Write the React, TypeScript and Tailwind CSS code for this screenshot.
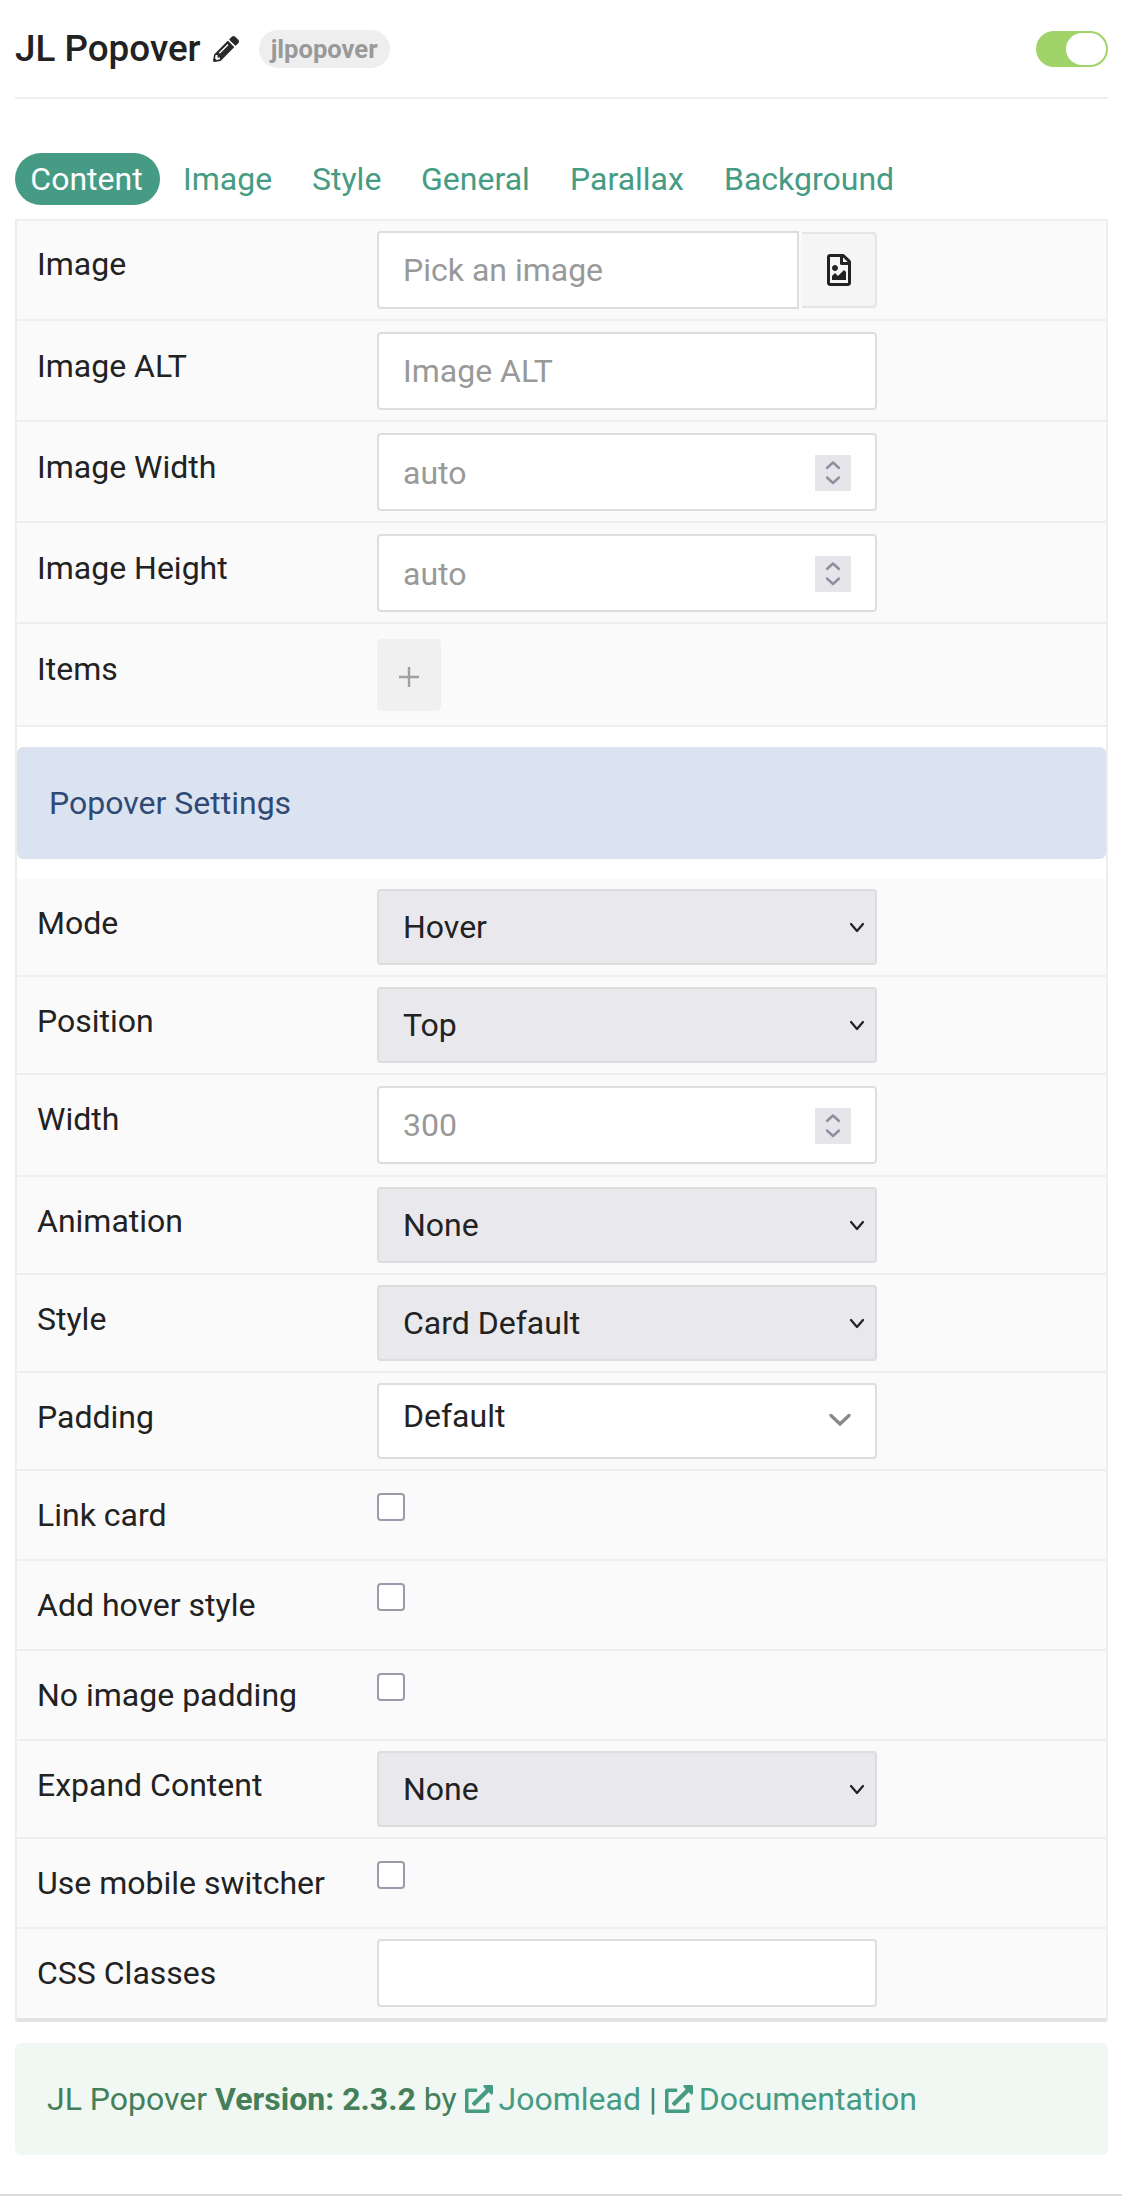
import React from "react";
import { FaPencilAlt, FaRegFileImage, FaExternalLinkAlt } from "react-icons/fa";

const ROW = "flex border-b-2 border-[#eeeeee] bg-[#fafafa] pl-[20px]";
const FIELD =
  "w-full h-full rounded-[4px] border-2 border-[#dddddd] bg-white pl-[24px] pr-[60px] text-[32px] text-[#222222] outline-none placeholder:text-[#999999]";
const GRAY_SELECT =
  "w-full h-full appearance-none rounded-[4px] border-2 border-[#dddddd] bg-[#e8e8ed] pl-[24px] pr-[60px] text-[32px] text-[#222222] outline-none";
const LABEL = "w-[340px] shrink-0 text-[32px] leading-[34px] text-[#222222]";

function Label({ children, first, late }: { children: React.ReactNode; first?: boolean; late?: boolean }) {
  return <div className={`${LABEL} ${first ? "pt-[26px]" : late ? "pt-[27px]" : "pt-[28px]"}`}>{children}</div>;
}

function TextRow({ label, placeholder }: { label: string; placeholder: string }) {
  return (
    <div className={ROW}>
      <Label>{label}</Label>
      <div className="mb-[10px] mt-[11px] h-[78px] w-[500px]">
        <input className={FIELD} placeholder={placeholder} readOnly />
      </div>
    </div>
  );
}

function NumberRow({ label, placeholder, tall }: { label: string; placeholder: string; tall?: boolean }) {
  return (
    <div className={ROW}>
      <Label late={tall}>{label}</Label>
      <div className={tall ? "relative mb-[11px] mt-[11px] h-[78px] w-[500px]" : "relative mb-[10px] mt-[11px] h-[78px] w-[500px]"}>
        <input className={`${FIELD} ${tall ? "" : "pt-[2px]"}`} placeholder={placeholder} readOnly />
        <div className="absolute right-[26px] top-[22px] h-[36px] w-[36px] bg-[#e5e5ea]">
          <svg width="36" height="36" viewBox="0 0 36 36" fill="none" stroke="#8e8e9e" strokeWidth="2.4" strokeLinecap="round" strokeLinejoin="round">
            <path d="M12 13 L18 7.5 L24 13" />
            <path d="M12 22.5 L18 28 L24 22.5" />
          </svg>
        </div>
      </div>
    </div>
  );
}

function SelectRow({ label, value }: { label: string; value: string }) {
  return (
    <div className={ROW}>
      <Label late>{label}</Label>
      <div className="relative my-[10px] h-[76px] w-[500px]">
        <select className={GRAY_SELECT} defaultValue={value}>
          <option>{value}</option>
        </select>
        <svg className="absolute right-[12px] top-[33px]" width="16" height="11" viewBox="0 0 16 11" fill="none" stroke="#222222" strokeWidth="2.2" strokeLinecap="round" strokeLinejoin="round">
          <path d="M2 2 L8 9 L14 2" />
        </svg>
      </div>
    </div>
  );
}

function CheckRow({ label }: { label: string }) {
  return (
    <div className={`${ROW} h-[90px]`}>
      <Label late>{label}</Label>
      <div className="mt-[22px] h-[28px] w-[28px] rounded-[4px] border-2 border-[#9a9aaa] bg-white" />
    </div>
  );
}

const tabs = [
  { t: "Image", w: "w-[129px]" },
  { t: "Style", w: "w-[109px]" },
  { t: "General", w: "w-[149px]" },
  { t: "Parallax", w: "w-[154px]" },
];

export default function App() {
  return (
    <div className="flex h-[2196px] w-[1122px] flex-col border-b-2 border-[#dddddd] bg-white font-['Roboto',sans-serif]">
      <div className="mx-[15px] flex h-[99px] w-[1093px] shrink-0 items-center border-b-2 border-[#eeeeee] pt-[1px]">
        <span className="text-[36.8px] font-medium leading-[40px] text-[#222222]">JL Popover</span>
        <FaPencilAlt className="ml-[12px] text-[26px] text-[#2a2a2a]" />
        <span className="ml-[20px] flex h-[38px] items-center rounded-full bg-[#eeeeee] px-[12px] text-[25.6px] font-bold text-[#999999]">jlpopover</span>
        <div className="ml-auto flex h-[36px] w-[72px] items-center justify-end rounded-full bg-[#a0d468] pr-[2px]">
          <div className="h-[32px] w-[40px] rounded-full bg-white" />
        </div>
      </div>

      <div className="ml-[15px] mt-[54px] flex h-[52px] items-center text-[32px] text-[#459b84]">
        <span className="flex h-[52px] w-[145px] items-center justify-center rounded-full bg-[#459b84] pr-[2px] text-white">Content</span>
        <div className="ml-[23px] flex">
          {tabs.map((x) => (
            <span key={x.t} className={x.w}>{x.t}</span>
          ))}
          <span>Background</span>
        </div>
      </div>

      <div className="mx-[15px] mt-[14px] w-[1093px] border-x-2 border-t-2 border-[#eeeeee]">
        <div className={ROW}>
          <Label first>Image</Label>
          <div className="mb-[10px] mt-[10px] flex h-[78px] w-[500px]">
            <input className={`${FIELD} rounded-r-none`} placeholder="Pick an image" readOnly />
            <button className="my-[1px] ml-[3px] flex h-[76px] w-[75px] shrink-0 items-center justify-center rounded-r-[4px] border-2 border-l-0 border-[#e5e5e5] bg-[#f5f5f5] text-[#222222]">
              <FaRegFileImage className="text-[32px]" />
            </button>
          </div>
        </div>
        <TextRow label="Image ALT" placeholder="Image ALT" />
        <NumberRow label="Image Width" placeholder="auto" />
        <NumberRow label="Image Height" placeholder="auto" />
        <div className={ROW}>
          <Label>Items</Label>
          <button className="mb-[14px] mt-[15px] flex h-[72px] w-[64px] items-center justify-center rounded-[5px] bg-[#f0f0f0]">
            <svg className="mt-[4px]" width="20" height="20" viewBox="0 0 20 20" stroke="#a0a0a0" strokeWidth="2.4" fill="none">
              <path d="M10 0 V20 M0 10 H20" />
            </svg>
          </button>
        </div>

        <div className="py-[20px]">
          <div className="flex h-[112px] items-center rounded-[6px] bg-[#dce3f0] pl-[32px] text-[32px] text-[#2f4a75]">Popover Settings</div>
        </div>

        <SelectRow label="Mode" value="Hover" />
        <SelectRow label="Position" value="Top" />
        <NumberRow label="Width" placeholder="300" tall />
        <SelectRow label="Animation" value="None" />
        <SelectRow label="Style" value="Card Default" />
        <div className={ROW}>
          <Label late>Padding</Label>
          <div className="relative my-[10px] h-[76px] w-[500px]">
            <select className={`${FIELD} appearance-none pb-[10px]`} defaultValue="Default">
              <option>Default</option>
            </select>
            <svg className="absolute right-[25px] top-[30px]" width="24" height="14" viewBox="0 0 24 14" fill="none" stroke="#888888" strokeWidth="3.4" strokeLinecap="round" strokeLinejoin="round">
              <path d="M3 2.5 L12 11 L21 2.5" />
            </svg>
          </div>
        </div>
        <CheckRow label="Link card" />
        <CheckRow label="Add hover style" />
        <CheckRow label="No image padding" />
        <SelectRow label="Expand Content" value="None" />
        <CheckRow label="Use mobile switcher" />
        <div className={`${ROW} border-b-4 border-b-[#e3e3e3]`}>
          <Label late>CSS Classes</Label>
          <div className="mb-[11px] mt-[10px] h-[68px] w-[500px]">
            <input className={FIELD} readOnly />
          </div>
        </div>
      </div>

      <div className="mx-[15px] mt-[21px] flex h-[112px] w-[1093px] items-center rounded-[6px] bg-[#f1f7f3] pl-[32px] text-[32px] text-[#457f5a]">
        <span>
          JL Popover <b className="font-bold">Version: 2.3.2</b> by{" "}
          <span className="text-[#459b84]">
            <FaExternalLinkAlt className="mr-[-2px] inline-block align-[-3px] text-[28px]" /> Joomlead
          </span>{" "}
          |{" "}
          <span className="text-[#459b84]">
            <FaExternalLinkAlt className="mr-[-2px] inline-block align-[-3px] text-[28px]" /> Documentation
          </span>
        </span>
      </div>
    </div>
  );
}
